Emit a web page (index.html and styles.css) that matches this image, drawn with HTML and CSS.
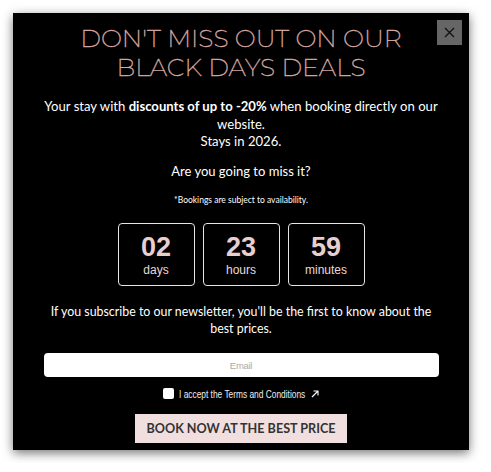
FILE: index.html
```html
<!DOCTYPE html>
<html lang="en">
<head>
<meta charset="utf-8">
<title>Black Days Deals</title>
<link rel="stylesheet" href="styles.css">
</head>
<body>
<div class="popup">
  <button class="close" aria-label="Close">
    <svg width="11" height="11" viewBox="0 0 11 11"><path d="M1 1L10 10M10 1L1 10" stroke="#111" stroke-width="1.3"/></svg>
  </button>
  <h1 class="title">DON'T MISS OUT ON OUR<br>BLACK DAYS DEALS</h1>
  <p class="lead">Your stay with <strong>discounts of up to -20%</strong> when booking directly on our website.<br>Stays in 2026.</p>
  <p class="question">Are you going to miss it?</p>
  <p class="note">*Bookings are subject to availability.</p>
  <div class="countdown">
    <div class="unit"><span class="num">02</span><span class="label">days</span></div>
    <div class="unit"><span class="num">23</span><span class="label">hours</span></div>
    <div class="unit"><span class="num">59</span><span class="label">minutes</span></div>
  </div>
  <p class="newsletter">If you subscribe to our newsletter, you'll be the first to know about the best prices.</p>
  <input class="email" type="text" placeholder="Email">
  <label class="terms"><span class="box"></span><span class="terms-text">I accept the Terms and Conditions</span>
    <svg class="arrow" width="8" height="8" viewBox="0 0 8 8"><path d="M1 7L7 1M2.5 1H7V5.5" stroke="#fff" stroke-width="1.1" fill="none"/></svg>
  </label>
  <button class="cta">BOOK NOW AT THE BEST PRICE</button>
</div>
</body>
</html>
```
FILE: styles.css
```css
html, body {
  margin: 0;
  padding: 0;
  background: #fff;
}
body {
  padding: 13px;
  font-family: Lato, "Liberation Sans", sans-serif;
}
.popup {
  position: relative;
  width: 456px;
  height: 437px;
  box-sizing: border-box;
  background: #000;
  color: #fff;
  box-shadow: 0 3px 10px rgba(0,0,0,0.55);
  display: flex;
  flex-direction: column;
  align-items: center;
  padding-top: 11px;
}
.close {
  position: absolute;
  top: 7px;
  right: 7px;
  width: 25px;
  height: 25px;
  border: 0;
  padding: 0;
  background: #666;
  display: flex;
  align-items: center;
  justify-content: center;
}
.title {
  margin: 0;
  font-family: Montserrat, "DejaVu Sans", sans-serif;
  font-weight: 200;
  font-size: 25px;
  line-height: 29px;
  color: #d8a7a2;
  -webkit-text-stroke: 0.35px #d8a7a2;
  text-align: center;
}
.lead {
  margin: 16px 0 0;
  width: 420px;
  font-size: 13.1px;
  line-height: 17.5px;
  text-align: center;
}
.lead strong { font-weight: 700; }
.question {
  margin: 11.5px 0 0;
  font-size: 13px;
  line-height: 18px;
}
.note {
  margin: 14px 0 0;
  font-size: 8.5px;
  line-height: 12px;
}
.countdown {
  display: flex;
  gap: 8px;
  margin-top: 17px;
}
.unit {
  width: 77px;
  height: 63px;
  box-sizing: border-box;
  border: 1.5px solid #e6e6e6;
  border-radius: 4px;
  display: flex;
  flex-direction: column;
  align-items: center;
  justify-content: center;
  font-family: "Liberation Sans", Arial, sans-serif;
}
.num {
  font-size: 27px;
  font-weight: 700;
  line-height: 31px;
  color: #e8cfcf;
}
.label {
  font-size: 12px;
  line-height: 14px;
  color: #ead9d9;
}
.newsletter {
  margin: 16.5px 0 0;
  width: 390px;
  font-size: 12.4px;
  line-height: 17px;
  text-align: center;
}
.email {
  margin-top: 16.5px;
  width: 395px;
  height: 24px;
  box-sizing: border-box;
  border: 0;
  border-radius: 4px;
  background: #fff;
  text-align: center;
  font-family: "Liberation Sans", sans-serif;
  font-size: 9.5px;
  letter-spacing: -0.3px;
}
.email::placeholder { color: #aaa; }
.terms {
  margin-top: 10.5px;
  display: flex;
  align-items: center;
  gap: 5px;
  font-family: "Liberation Sans", sans-serif;
  font-size: 11px;
  color: #eee;
}
.box {
  width: 11px;
  height: 11px;
  background: #fff;
  border-radius: 2px;
}
.terms-text {
  display: inline-block;
  width: 126px;
  white-space: nowrap;
  transform: scaleX(0.76);
  transform-origin: left center;
}
.arrow { margin-left: 1px; }
.cta {
  margin-top: 14.5px;
  width: 212px;
  height: 29px;
  border: 0;
  padding: 0;
  background: #f1dfdf;
  color: #333;
  font-family: Lato, sans-serif;
  font-weight: 700;
  font-size: 12.6px;
  white-space: nowrap;
}
```
